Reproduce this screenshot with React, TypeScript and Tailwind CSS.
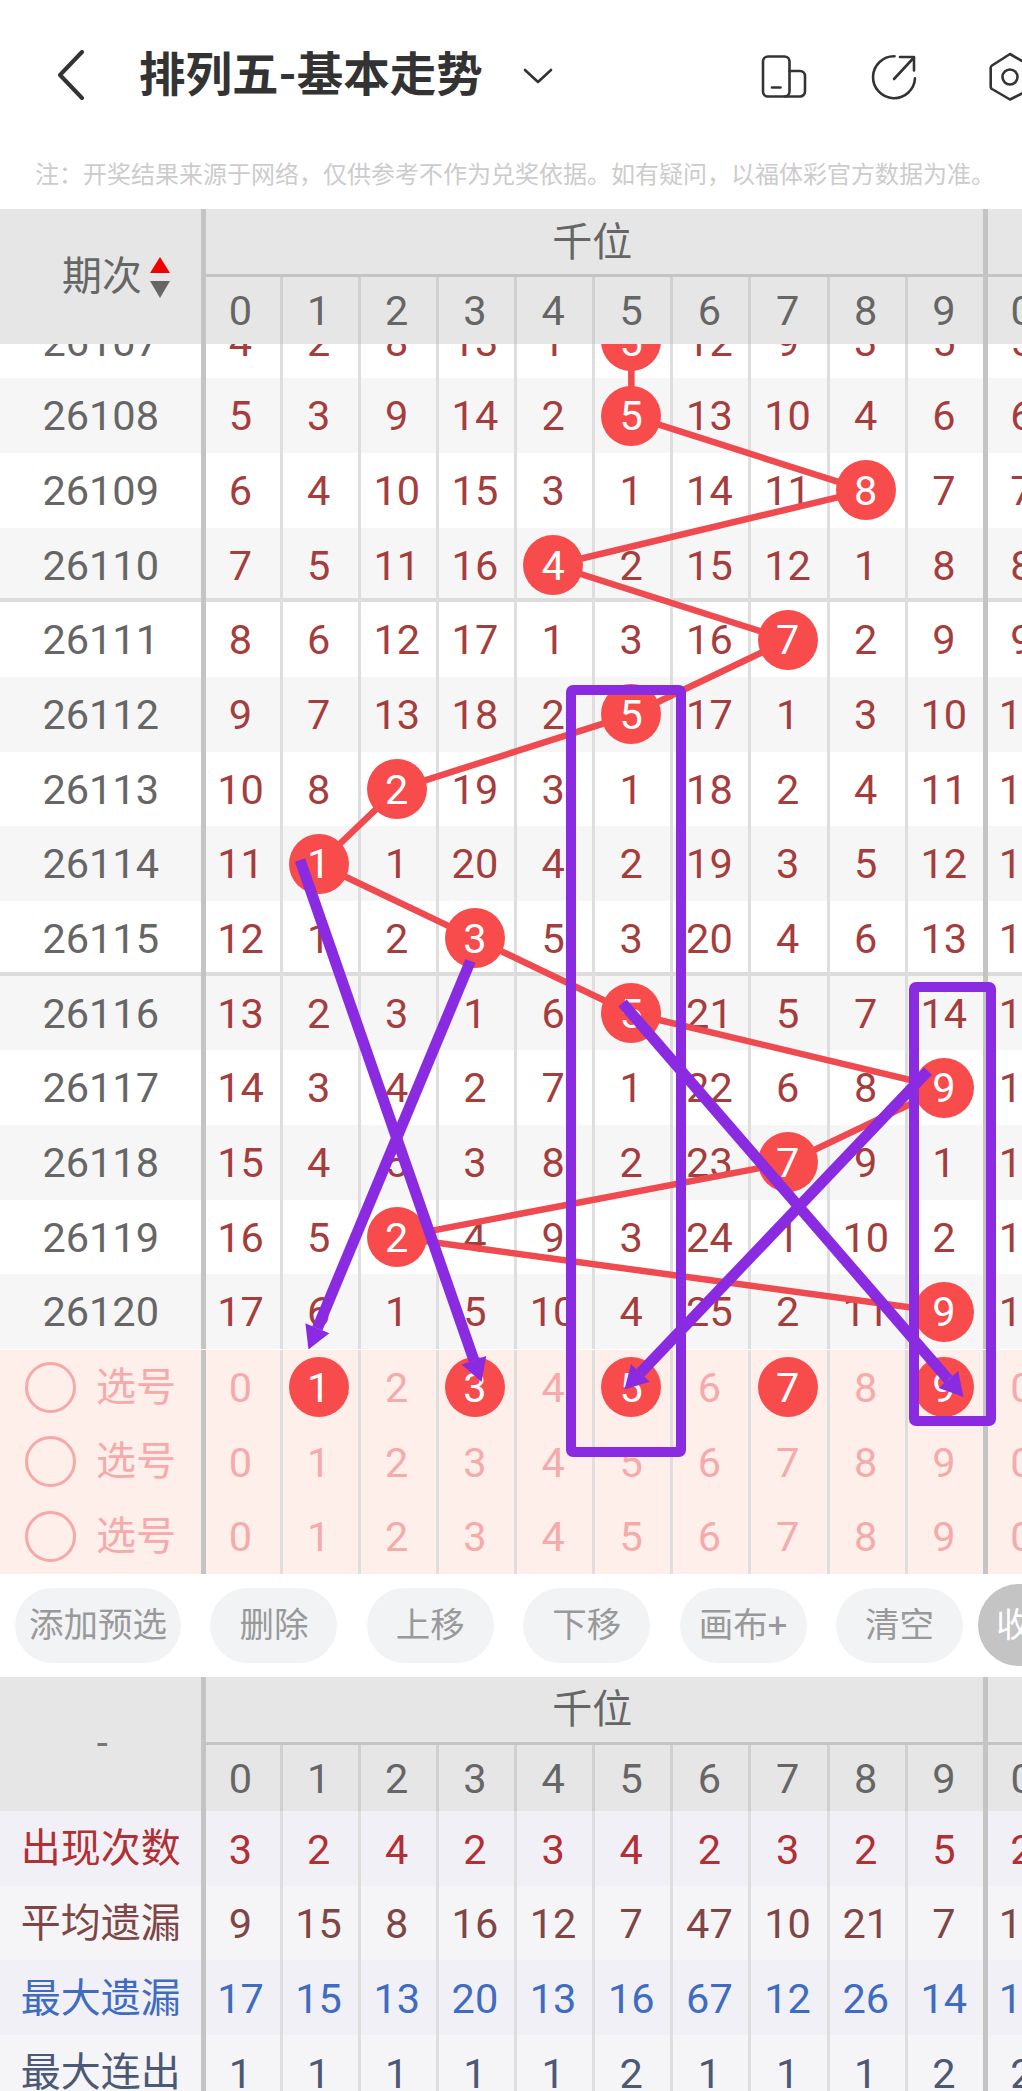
import React from "react";

type Row = { id: string; v: (number | string)[]; ball: number | null };

const P = 78.17;
const LEFT = 201.4;
const colX = (i: number) => LEFT + P * i + 39.1;
const rowY = (r: number) => 341.3 + 74.67 * r;

const rows: Row[] = [
  { id: "26107", v: [4, 2, 8, 13, 1, 5, 12, 9, 3, 5, 5], ball: 5 },
  { id: "26108", v: [5, 3, 9, 14, 2, 5, 13, 10, 4, 6, 6], ball: 5 },
  { id: "26109", v: [6, 4, 10, 15, 3, 1, 14, 11, 8, 7, 7], ball: 8 },
  { id: "26110", v: [7, 5, 11, 16, 4, 2, 15, 12, 1, 8, 8], ball: 4 },
  { id: "26111", v: [8, 6, 12, 17, 1, 3, 16, 7, 2, 9, 9], ball: 7 },
  { id: "26112", v: [9, 7, 13, 18, 2, 5, 17, 1, 3, 10, 10], ball: 5 },
  { id: "26113", v: [10, 8, 2, 19, 3, 1, 18, 2, 4, 11, 11], ball: 2 },
  { id: "26114", v: [11, 1, 1, 20, 4, 2, 19, 3, 5, 12, 12], ball: 1 },
  { id: "26115", v: [12, 1, 2, 3, 5, 3, 20, 4, 6, 13, 13], ball: 3 },
  { id: "26116", v: [13, 2, 3, 1, 6, 5, 21, 5, 7, 14, 14], ball: 5 },
  { id: "26117", v: [14, 3, 4, 2, 7, 1, 22, 6, 8, 9, 15], ball: 9 },
  { id: "26118", v: [15, 4, 5, 3, 8, 2, 23, 7, 9, 1, 16], ball: 7 },
  { id: "26119", v: [16, 5, 2, 4, 9, 3, 24, 1, 10, 2, 17], ball: 2 },
  { id: "26120", v: [17, 6, 1, 5, 10, 4, 25, 2, 11, 9, 18], ball: 9 },
];

const digits = [0, 1, 2, 3, 4, 5, 6, 7, 8, 9, 0];

const lineClass = (i: number) =>
  i === 0 || i === 10
    ? "shadow-[inset_5px_0_0_#c4c4c4]"
    : "shadow-[inset_3px_0_0_#dedede]";

function Ball({ n }: { n: number | string }) {
  return (
    <span className="relative z-10 flex h-[60px] w-[60px] shrink-0 items-center justify-center rounded-full bg-[#f84b4b] pt-[1px] text-white">
      {n}
    </span>
  );
}

function Cell({ i, children }: { i: number; children: React.ReactNode }) {
  return (
    <div className={`flex h-full w-[78.17px] shrink-0 items-center justify-center ${lineClass(i)}`}>
      {children}
    </div>
  );
}

function TableHead({ left, digitH }: { left: React.ReactNode; digitH: string }) {
  return (
    <div className="flex w-[1800px] bg-[#e6e6e6]">
      <div className="flex w-[201.4px] shrink-0 items-center">{left}</div>
      {[0, 1].map((g) => (
        <div key={g} className="flex w-[781.7px] shrink-0 flex-col shadow-[inset_5px_0_0_#c4c4c4]">
          <div className="ml-[5px] flex h-[68px] items-center justify-center border-b-[3px] border-[#c4c4c4] pt-[2px] text-[40px] text-[#666]">
            <span className="-ml-[5px]">{g === 0 ? "千位" : "百位"}</span>
          </div>
          <div className={`flex ${digitH} text-[#666]`}>
            {digits.slice(0, 10).map((d, i) => (
              <div
                key={i}
                className={`flex h-full w-[78.17px] items-center justify-center pt-[1px] ${i === 0 ? "" : "shadow-[inset_3px_0_0_#d0d0d0]"}`}
              >
                {d}
              </div>
            ))}
          </div>
        </div>
      ))}
    </div>
  );
}

function Arrow({ x1, y1, x2, y2 }: { x1: number; y1: number; x2: number; y2: number }) {
  const dx = x2 - x1;
  const dy = y2 - y1;
  const len = Math.hypot(dx, dy);
  const ux = dx / len;
  const uy = dy / len;
  const bx = x2 - ux * 23;
  const by = y2 - uy * 23;
  const nx = -uy * 13;
  const ny = ux * 13;
  return (
    <g>
      <line x1={x1} y1={y1} x2={bx} y2={by} stroke="#8a2be2" strokeWidth="11" />
      <polygon points={`${x2},${y2} ${bx + nx},${by + ny} ${bx - nx},${by - ny}`} fill="#8a2be2" />
    </g>
  );
}

function SelectRow({ balls }: { balls?: number[] }) {
  return (
    <div className="flex h-[74.67px] w-[1800px] bg-[#ffefea] text-[#f5abab]">
      <div className="flex h-full w-[201.4px] shrink-0 items-center pl-[25px]">
        <span className="h-[51px] w-[51px] shrink-0 rounded-full border-[3px] border-[#f7a8a8]" />
        <span className="ml-[20px] pt-[1px] text-[40px]">选号</span>
      </div>
      {digits.map((d, i) => (
        <Cell key={i} i={i}>
          {balls && balls.includes(i) ? <Ball n={d} /> : <span className="pt-[1px]">{d}</span>}
        </Cell>
      ))}
    </div>
  );
}

const stats = [
  { label: "出现次数", bg: "bg-[#f0f0f6]", color: "text-[#b22f33]", v: [3, 2, 4, 2, 3, 4, 2, 3, 2, 5, 2] },
  { label: "平均遗漏", bg: "bg-[#f5f5f7]", color: "text-[#804545]", v: [9, 15, 8, 16, 12, 7, 47, 10, 21, 7, 15] },
  { label: "最大遗漏", bg: "bg-[#f0f0f6]", color: "text-[#3f6cc0]", v: [17, 15, 13, 20, 13, 16, 67, 12, 26, 14, 17] },
  { label: "最大连出", bg: "bg-[#f5f5f7]", color: "text-[#4b5876]", v: [1, 1, 1, 1, 1, 2, 1, 1, 1, 2, 2] },
];

const buttons = [
  { t: "添加预选", w: "w-[166px]" },
  { t: "删除", w: "w-[127px]" },
  { t: "上移", w: "w-[127px]" },
  { t: "下移", w: "w-[127px]" },
  { t: "画布+", w: "w-[127px]" },
  { t: "清空", w: "w-[127px]" },
];

export default function App() {
  const pts = rows.map((r, i) => `${colX(r.ball as number)},${rowY(i) - 344}`).join(" ");
  return (
    <div className="relative h-[2091px] w-[1022px] overflow-hidden bg-white text-[41.5px] leading-none [font-family:Roboto,'Noto_Sans_CJK_SC',sans-serif]">
      {/* nav */}
      <div className="relative h-[150px] w-full">
        <div className="flex h-full items-center">
          <svg className="ml-[56px] shrink-0" width="30" height="50" viewBox="0 0 30 50" fill="none">
            <path d="M26 2 L4 25 L26 48" stroke="#333" strokeWidth="4" strokeLinecap="round" strokeLinejoin="round" />
          </svg>
          <h1 className="ml-[53px] text-[46.500px] font-bold text-[#333]">排列五-基本走势</h1>
          <svg className="ml-[40px] mt-[2px] shrink-0" width="30" height="16" viewBox="0 0 30 16" fill="none">
            <path d="M2 2 L15 14 L28 2" stroke="#333" strokeWidth="2.6" strokeLinecap="round" strokeLinejoin="round" />
          </svg>
        </div>
        {/* action icons */}
        <svg className="absolute left-[760px] top-[50px]" width="262" height="54" viewBox="760 50 262 54" fill="none" stroke="#333" strokeWidth="2.6" strokeLinecap="round" strokeLinejoin="round">
          <rect x="763" y="56.5" width="26.5" height="40" rx="5" />
          <path d="M789.5 71 H800 a5 5 0 0 1 5 5 V91.500 a5 5 0 0 1 -5 5 H785" />
          <path d="M772 87.500 H780.500" />
          <path d="M894.5 56.200 A21 21 0 1 0 915 78.300" />
          <path d="M894 79 L913.500 58" />
          <path d="M900 57 H914 V70.500" />
          <path d="M1010 54 L1029 65 A3 3 0 0 1 1030.500 68 V87 A3 3 0 0 1 1029 90 L1010 99.500 L992 89 A3 3 0 0 1 990.700 87 V68 A3 3 0 0 1 992 65.500 Z" />
          <circle cx="1010" cy="77" r="7.500" />
        </svg>
      </div>

      {/* note */}
      <div className="h-[59px] pl-[35px] pt-[13px] text-[24px] text-[#cccccc]">
        注：开奖结果来源于网络，仅供参考不作为兑奖依据。如有疑问，以福体彩官方数据为准。
      </div>

      <div className="relative z-30">
        <TableHead
          digitH="h-[67px]"
          left={
            <div className="flex items-center pb-[1px] pl-[62px] pt-[2px]">
              <span className="text-[40px] text-[#666]">期次</span>
              <svg className="ml-[8px]" width="20" height="41" viewBox="0 0 20 41">
                <polygon points="10,0 20,16 0,16" fill="#f00000" />
                <polygon points="0,24 20,24 10,41" fill="#666" />
              </svg>
            </div>
          }
        />
      </div>

      {/* scrolling rows */}
      <div className="relative h-[1006px] overflow-hidden">
        <div className="-mt-[40.3px]">
          {rows.map((r, idx) => (
            <div
              key={r.id}
              className={`flex h-[74.67px] w-[1800px] ${idx % 2 === 1 ? "bg-[#f6f6f6]" : "bg-white"} ${
                r.id === "26110" || r.id === "26115" ? "shadow-[inset_0_-4px_0_#dcdcdc]" : ""
              } text-[#a53d3d]`}
            >
              <div className="flex h-full w-[201.4px] shrink-0 items-center justify-center pt-[1px] text-[#666]">{r.id}</div>
              {r.v.map((n, i) => (
                <Cell key={i} i={i}>
                  {i === r.ball ? <Ball n={n} /> : <span className="pt-[1px]">{n}</span>}
                </Cell>
              ))}
            </div>
          ))}
        </div>
        <svg className="absolute left-0 top-0 z-[5]" width="1022" height="1006" viewBox="0 0 1022 1006" fill="none">
          <polyline points={pts} stroke="#ef4a50" strokeWidth="6.5" />
        </svg>
      </div>

      {/* pick rows */}
      <SelectRow balls={[1, 3, 5, 7, 9]} />
      <SelectRow />
      <SelectRow />

      {/* buttons */}
      <div className="flex h-[103px] items-center overflow-hidden pl-[15px]">
        <div className="flex items-center gap-[29.4px] text-[#999]">
          {buttons.map((b) => (
            <div key={b.t} className={`flex h-[75px] ${b.w} shrink-0 items-center justify-center rounded-full bg-[#f2f3f5] text-[34.500px]`}>
              {b.t}
            </div>
          ))}
          <div className="-ml-[14.4px] flex h-[82px] w-[120px] shrink-0 items-center rounded-full bg-[#c4c4c4] pl-[18px] text-[34.500px] text-white">
            收起
          </div>
        </div>
      </div>

      <TableHead digitH="h-[66px]" left={<span className="w-full pl-[3px] text-center text-[40px] text-[#777]">-</span>} />

      {stats.map((s) => (
        <div key={s.label} className={`flex h-[74.67px] w-[1800px] ${s.bg} ${s.color}`}>
          <div className="flex h-full w-[201.4px] shrink-0 items-center justify-center pt-[2px] text-[40px]">{s.label}</div>
          {s.v.map((n, i) => (
            <Cell key={i} i={i}>
              <span className="pt-[2px]">{n}</span>
            </Cell>
          ))}
        </div>
      ))}

      {/* hand-drawn marks on top of the chart */}
      <svg className="pointer-events-none absolute left-0 top-0 z-40" width="1022" height="2091" viewBox="0 0 1022 2091" fill="none">
        <rect x="571" y="690" width="110" height="762" rx="2" stroke="#8a2be2" strokeWidth="10" />
        <rect x="914" y="987" width="77" height="434" rx="2" stroke="#8a2be2" strokeWidth="10" />
        <Arrow x1={300} y1={860} x2={481.500} y2={1382} />
        <Arrow x1={470.500} y1={961} x2={308.500} y2={1349.500} />
        <Arrow x1={622.500} y1={1003} x2={963.500} y2={1397} />
        <Arrow x1={928} y1={1071} x2={624.500} y2={1389.500} />
      </svg>
    </div>
  );
}
